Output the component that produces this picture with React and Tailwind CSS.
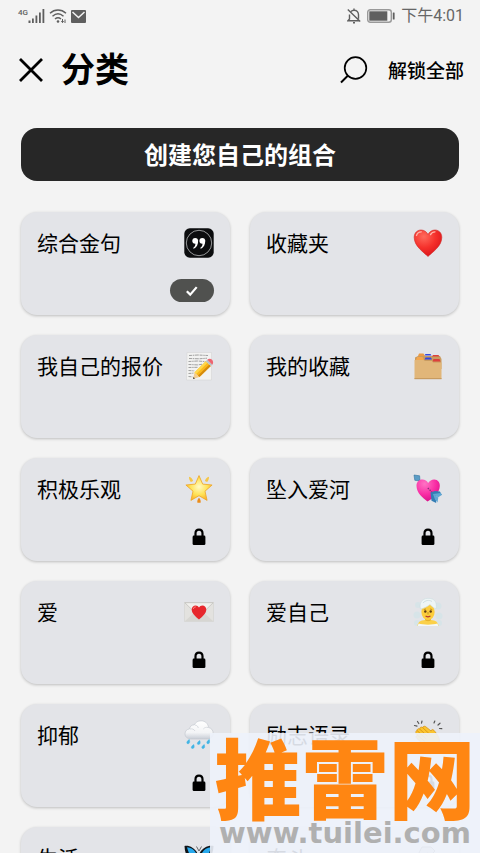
import React from "react";

function QuoteIcon() {
  return (
    <svg viewBox="0 0 30 30" className="h-[30px] w-[30px]">
      <rect x="0.3" y="0.3" width="29.4" height="29.4" rx="5.5" fill="#0c0d0f" />
      <circle cx="15" cy="15" r="12.7" fill="none" stroke="#b9babb" strokeWidth="0.8" />
      <g fill="#fff">
        <circle cx="11.2" cy="12.8" r="2.9" />
        <path d="M14.1 12.6c.2 4-1.500 7-4.300 8.100l-.7-.8c1.700-1.200 2.500-2.800 2.300-5z" />
        <circle cx="18.300" cy="12.800" r="2.900" />
        <path d="M21.200 12.600c.2 4-1.500 7-4.300 8.100l-.7-.8c1.700-1.200 2.500-2.800 2.300-5z" />
      </g>
    </svg>
  );
}

function HeartIcon() {
  return (
    <svg viewBox="0 0 30 30" className="h-[30px] w-[30px]">
      <defs>
        <radialGradient id="heartRed" cx="0.35" cy="0.25" r="0.85">
          <stop offset="0" stopColor="#ff6a5c" />
          <stop offset="0.5" stopColor="#f5302b" />
          <stop offset="1" stopColor="#d50f18" />
        </radialGradient>
      </defs>
      <path d="M15 28.500C10.500 24 1.200 18.300 1.200 9.400 1.200 4.800 4.300 2 8 2c3.200 0 5.500 1.700 7 4.500C16.500 3.700 18.800 2 22 2c3.700 0 6.800 2.800 6.800 7.400C28.800 18.300 19.500 24 15 28.500z" fill="url(#heartRed)" stroke="#cf2a26" strokeWidth="0.6" />
      <path d="M3.500 7.500C4.300 4.900 6 3.800 8.300 3.800M17.500 6.600C18.600 4.700 20 3.800 22 3.800" fill="none" stroke="#ffb5aa" strokeWidth="1.300" strokeLinecap="round" />
    </svg>
  );
}

function MemoIcon() {
  return (
    <svg viewBox="0 0 30 30" className="h-[30px] w-[30px]">
      <path d="M3 1.500h24.500v27.500H2.500z" fill="#f2f2f1" stroke="#d5d5d5" strokeWidth="0.6" />
      <g fill="none" stroke="#8a8a8a" strokeWidth="0.8" strokeDasharray="3 .7 1.500 .6 4 .8">
        <path d="M5 4.500l9-.5 10 .5M5 7.500l10 .3 8-.6M4.500 10.500l9-.5 8 .6M4.500 13.500l9 .4 5-.7M4.500 16.500l9-.2M4.500 19.500l6 .4M4.500 22.500l5-.4M4.500 25.500l4 .4" />
      </g>
      <path d="M10.500 21.500L9 28l6.500-1.900z" fill="#f3cd93" />
      <path d="M9.500 26L9 28l2-.6z" fill="#333" />
      <path d="M10.500 21.500L21.800 10.200l5 4.900-11.300 11z" fill="#fbb81c" />
      <path d="M10.500 21.500L21.800 10.200l1.700 1.600-11.300 11.300z" fill="#ffd84b" />
      <path d="M14 24.600l11.300-11 1.500 1.500-11.300 11z" fill="#d58a0b" />
      <path d="M21.800 10.200l1.500-1.500 5 5-1.500 1.400z" fill="#b9c2c6" />
      <path d="M23.300 8.700c1.500-1.400 3.400-1.300 4.700 0s1.600 3.400.3 5z" fill="#ee6470" />
    </svg>
  );
}

function FolderIcon() {
  return (
    <svg viewBox="0 0 30 30" className="h-[30px] w-[30px]">
      <path d="M2 6.500L5 5h22l1.500 3v10H2z" fill="#c99b5f" />
      <path d="M5 5l1-2.500h4.500L12 5z" fill="#eb9a44" />
      <path d="M11.500 4.500l1-1.500h5l1 1.500z" fill="#3347dd" />
      <path d="M19 5.500L20 4h5.500l1 1.500z" fill="#dd3f3c" />
      <path d="M3 9l1.200-3h5.300l1.500 3z" fill="#f5a54a" />
      <path d="M11.500 8.500l1-2h5.500l1 2z" fill="#3347dd" />
      <path d="M19.500 10.500l1-2.500h6l1 2.500z" fill="#dd3f3c" />
      <path d="M1.500 9h9l1.500 1h7l1 1.500h8.500V28h-27z" fill="#e1b679" />
      <path d="M1.500 27h27v1.200h-27z" fill="#c79b60" />
    </svg>
  );
}

function StarIcon() {
  return (
    <svg viewBox="0 0 30 30" className="h-[30px] w-[30px]">
      <defs>
        <radialGradient id="starGold" cx="0.5" cy="0.45" r="0.6">
          <stop offset="0" stopColor="#fffac5" />
          <stop offset="0.55" stopColor="#ffe255" />
          <stop offset="1" stopColor="#f9a824" />
        </radialGradient>
      </defs>
      <path d="M15 1.600l3.700 8.500 9.400.9-7.100 6.200 2.100 9.200L15 21.700l-8.100 4.700L9 17.200 1.900 11l9.400-.9z" fill="url(#starGold)" stroke="#eea426" strokeWidth="0.8" strokeLinejoin="round" />
      <path d="M5 2.800c2 .5 3.600 2.100 4.100 4.300l-2.200.9C5.700 6.900 4.900 5 5 2.800zM25 2.800c-2 .5-3.600 2.100-4.100 4.300l2.200.9C24.300 6.900 25.100 5 25 2.800z" fill="#f5c647" />
      <path d="M15 23.700c1.300 1.200 2 3 1.600 5.100h-3.200c-.4-2.100.3-3.900 1.600-5.100z" fill="#eb8c19" />
    </svg>
  );
}

function ArrowHeartIcon() {
  return (
    <svg viewBox="0 0 30 30" className="h-[30px] w-[30px]">
      <defs>
        <radialGradient id="heartPink" cx="0.35" cy="0.2" r="0.9">
          <stop offset="0" stopColor="#ff73c4" />
          <stop offset="0.55" stopColor="#f82ba3" />
          <stop offset="1" stopColor="#d00c83" />
        </radialGradient>
      </defs>
      <path d="M4 4l5 5" stroke="#3f7fac" strokeWidth="1.500" />
      <path d="M1 1l5.600.8L7 7 1.800 6.300z" fill="#5b9dc6" stroke="#3274a0" strokeWidth="0.6" />
      <path d="M14.500 27.500C9.700 24 3.500 19 3.500 11.800 3.500 8 5.800 5.400 9.300 5.400c2.700 0 4.700 1.300 5.800 3.700C16.800 6.600 18.800 5.300 21.300 5.400c3.600.2 5.700 3 5.500 6.600-.4 6.500-5.700 12-12.300 15.500z" fill="url(#heartPink)" />
      <path d="M14.800 14l8 8" stroke="#873477" strokeWidth="1.300" strokeDasharray="1.500 1" />
      <path d="M17.500 18.500l2.800 2.700 8.600-.2-2-3.500-5-.5zM17.500 18.500l1 8.200 4.700 2.300-.5-6z" fill="#347db4" />
      <path d="M20 20l5.200 3.200 3.600-2.200-1-2zM20 20l2 5.500 2.500 3 .8-5z" fill="#60a7d4" />
    </svg>
  );
}

function LoveLetterIcon() {
  return (
    <svg viewBox="0 0 30 30" className="h-[30px] w-[30px]">
      <path d="M.5 5.500h29v19H.5z" fill="#e3e2df" stroke="#cfcfcb" strokeWidth="0.5" />
      <path d="M.8 24.300L12 14h6l11.200 10.300z" fill="#d7d6d2" />
      <path d="M.8 5.700L13 17.500c1.200 1 2.800 1 4 0L29.200 5.700z" fill="#f1f0ed" stroke="#bdbcb8" strokeWidth="0.7" />
      <path d="M15 22.500c-3-2.400-7.300-5.800-7.300-9.900 0-2.600 1.700-4.200 3.900-4.200 1.500 0 2.700.8 3.400 2.100.7-1.300 1.900-2.100 3.400-2.100 2.200 0 3.900 1.600 3.900 4.200 0 4.100-4.300 7.500-7.300 9.900z" fill="#e7272c" />
      <path d="M9.500 11.500c.2-1 .9-1.600 1.900-1.600" fill="none" stroke="#ff8c85" strokeWidth="1" strokeLinecap="round" />
    </svg>
  );
}

function SteamIcon() {
  return (
    <svg viewBox="0 0 30 30" className="h-[30px] w-[30px]">
      <g fill="#d4e5e9" opacity="0.75">
        <circle cx="5" cy="8" r="3" />
        <circle cx="4" cy="18" r="3.500" />
        <circle cx="25" cy="9" r="3.500" />
        <circle cx="26" cy="19" r="3.500" />
        <circle cx="4" cy="26" r="3" />
        <circle cx="26" cy="26" r="3" />
      </g>
      <path d="M12 20h6v5h-6z" fill="#e6b12b" />
      <path d="M4.500 29c.3-4 3-5.800 7.500-6 1.500 1.600 4.500 1.600 6 0 4.500.2 7.200 2 7.500 6z" fill="#fbd049" />
      <path d="M5.500 26.500c5 1.500 14 1.500 19 0l.8 2.500H4.700z" fill="#f4f7f7" />
      <ellipse cx="15" cy="15" rx="6.600" ry="8" fill="#fccd3d" />
      <path d="M7.500 12C6 6.500 8.500 1.500 15 1.300c6.500-.2 9.500 4.200 8 10.700-2.300-1-4.500-3-6-4.500C14.500 9.500 11 11.500 7.500 12z" fill="#eef5f6" stroke="#cbdcdf" strokeWidth="0.6" />
      <path d="M10 6c2-2.500 6-3.500 9-1.500" fill="none" stroke="#c6d8dc" strokeWidth="0.8" />
      <circle cx="12.300" cy="14.500" r="1.200" fill="#5c3b13" />
      <circle cx="17.700" cy="14.500" r="1.200" fill="#5c3b13" />
      <path d="M10.800 12.500l2.200-.5M17 12l2.200.5M15 15v2.500" fill="none" stroke="#a97816" strokeWidth="0.7" />
      <path d="M13 19.200c1.200.7 2.800.7 4 0" fill="none" stroke="#b8382e" strokeWidth="1.200" strokeLinecap="round" />
    </svg>
  );
}

function RainIcon() {
  return (
    <svg viewBox="0 0 30 30" className="h-[30px] w-[30px]">
      <defs>
        <linearGradient id="cloudWhite" x1="0" y1="0" x2="0" y2="1">
          <stop offset="0" stopColor="#fff" />
          <stop offset="0.65" stopColor="#f3f4f6" />
          <stop offset="1" stopColor="#c8cdd6" />
        </linearGradient>
      </defs>
      <path d="M7 19c-3.500 0-6-2.100-6-5.200 0-2.700 1.900-4.600 4.500-4.900C6 6 8 4.700 10.300 4.900 11.500 2.200 14 .8 17 .8c4.300 0 7.200 2.800 7.500 6.700 2.800.5 4.700 2.800 4.700 5.700 0 3.500-2.600 5.800-6.200 5.800z" fill="url(#cloudWhite)" stroke="#c4c8d0" strokeWidth="0.7" />
      <path d="M6 9c2-.5 4 .2 5 2M11 5c2 .3 3 1.500 3.300 3M24 7.500c-2-.5-3.500 0-4.700 1.500" fill="none" stroke="#d5d8de" strokeWidth="0.9" />
      <g fill="#42b4e4">
        <path d="M5.300 19.500c.9 2.500.2 4.300-1.300 4.300s-2-2.200 1.300-4.300zM15.800 20.500c.9 2.500.2 4-1.300 4s-2-2 1.300-4zM25.300 19.500c.9 2.500.2 4.300-1.300 4.300s-2-2.200 1.300-4.300zM9.800 24.500c.9 2.500.2 4-1.300 4s-2-2 1.300-4zM20.300 24.500c.9 2.500.2 4-1.300 4s-2-2 1.300-4z" stroke="#42b4e4" strokeWidth="0.5" />
      </g>
    </svg>
  );
}

function ClapIcon() {
  return (
    <svg viewBox="0 0 30 30" className="h-[30px] w-[30px]">
      <path d="M1.500 5.500l2.500.6M4.500 1.500l1.300 2M9 1l-.5 2.200M21 3l.8-2M25 5l2-1.800M26.500 8.500l2.300.2" fill="none" stroke="#555" strokeWidth="1.200" strokeLinecap="round" />
      <path d="M4 10.500c.5-2 1.700-2.300 2.800-1.300-.2-2 1.500-2.800 3-1.500.2-1.800 2-2 3.300-.7l5 4c.2-1.500 1.700-2 2.800-.7 3.500 4 7.300 9 4.600 14.200-3 5-9.500 5.300-14 1.200L4 18.500c-1.600-1.500-1-3 .6-3.200C2.300 13.500 2.400 11 4 10.500z" fill="#fbc52f" stroke="#d68f10" strokeWidth="0.7" />
      <path d="M6.800 9.200l7.400 6.800M9.800 7.700l7 6.600M4.600 15.300l7 6M4 10.500l9 8.300" fill="none" stroke="#d68f10" strokeWidth="0.8" strokeLinecap="round" />
    </svg>
  );
}

function ButterflyIcon() {
  return (
    <svg viewBox="0 0 30 30" className="h-[30px] w-[30px]">
      <path d="M.5 3C6 2 12.500 6 14.500 13 16.500 6 23 2 29.500 3c-.3 7-2.500 12-7 14 1.500 4-1 8.500-4 9-2 0-3-3-3.500-6-.5 3-1.500 6-3.500 6-3-.5-5.500-5-4-9C3 15 .8 10 .5 3z" fill="#101418" />
      <path d="M3 4.300c5 0 9.500 4.200 10.700 10.200C9.500 17 5 13 3 4.300zM27 4.300c-5 0-9.500 4.200-10.700 10.200C20.500 17 25 13 27 4.300z" fill="#28a9ed" />
      <path d="M13.500 17c-3 0-4.500 2-3.500 6 2.500 1 3.500-3 3.500-6zM16.500 17c3 0 4.500 2 3.500 6-2.500 1-3.500-3-3.500-6z" fill="#2289d6" />
      <path d="M12.500 3.500L15 8l2.500-4.500" fill="none" stroke="#333" strokeWidth="0.7" />
    </svg>
  );
}

function MuscleIcon() {
  return (
    <svg viewBox="0 0 30 30" className="h-[30px] w-[30px]">
      <path d="M9 4h9l4 4-4 4-4-2v8c5-4 13-3 15 3l-4 7H5L3 16z" fill="#d8d8d8" stroke="#8a8a8a" strokeWidth="1" />
    </svg>
  );
}

function LockIcon() {
  return (
    <svg viewBox="0 0 14 18" className="h-[18px] w-[14px]" role="img" aria-label="已锁定">
      <path d="M3.500 8.500V5.300C3.500 3 5 1.600 7 1.600s3.500 1.400 3.500 3.700v3.200" fill="none" stroke="#000" strokeWidth="2.200" />
      <rect x="0.6" y="7.600" width="12.800" height="9.400" rx="1.300" fill="#000" />
    </svg>
  );
}

const CATEGORIES = [
  { name: "综合金句", Icon: QuoteIcon, state: "selected" },
  { name: "收藏夹", Icon: HeartIcon, state: "open" },
  { name: "我自己的报价", Icon: MemoIcon, state: "open" },
  { name: "我的收藏", Icon: FolderIcon, state: "open" },
  { name: "积极乐观", Icon: StarIcon, state: "locked" },
  { name: "坠入爱河", Icon: ArrowHeartIcon, state: "locked" },
  { name: "爱", Icon: LoveLetterIcon, state: "locked" },
  { name: "爱自己", Icon: SteamIcon, state: "locked" },
  { name: "抑郁", Icon: RainIcon, state: "locked" },
  { name: "励志语录", Icon: ClapIcon, state: "locked" },
  { name: "生活", Icon: ButterflyIcon, state: "locked" },
  { name: "奋斗", Icon: MuscleIcon, state: "locked" },
];

function CategoryCard({ name, Icon, state }) {
  return (
    <button
      type="button"
      aria-pressed={state === "selected"}
      className="flex min-h-[103px] flex-col justify-between rounded-2xl bg-[#e3e4e8] px-4 pt-4 pb-[13px] text-left shadow-[0_1px_3px_rgba(0,0,0,0.22)]"
    >
      <span className="flex w-full items-start justify-between">
        <span className="text-[21px] leading-7">{name}</span>
        <Icon />
      </span>
      {state === "selected" && (
        <span className="flex h-[23px] w-11 items-center justify-center self-end rounded-full bg-[#50514f]">
          <svg viewBox="0 0 14 12" className="h-3 w-[14px]">
            <path d="M1.800 6.200l3.400 3.400 6.500-7.500" fill="none" stroke="#fff" strokeWidth="2.200" />
          </svg>
        </span>
      )}
      {state === "locked" && (
        <span className="flex w-[30px] justify-center self-end pb-[2px]">
          <LockIcon />
        </span>
      )}
    </button>
  );
}

function StatusBar() {
  return (
    <div className="flex h-8 items-center justify-between pr-4 pl-[18px] text-[#5f5f5f]">
      <div className="flex items-center gap-1">
        <div className="flex">
          <span className="font-['Roboto',sans-serif] text-[8px] leading-[10px] font-medium">4G</span>
          <svg viewBox="0 0 17 16" className="h-4 w-[17px]" fill="currentColor">
            <path d="M.5 12.500h2V15h-2zM4 10.500h1.800V15H4zM7.500 7.500h1.800V15H7.500zM11 4.500h1.800V15H11zM14.500 1h1.800v14h-1.800z" />
          </svg>
        </div>
        <svg viewBox="0 0 18 16" className="h-4 w-[18px]" fill="none" stroke="currentColor" strokeWidth="1.500">
          <path d="M1 5.200c4.800-4.400 11.200-4.400 16 0M3.500 8.200c3.500-3 7.500-3 11 0M6 11c2-1.700 4-1.700 6 0" />
          <circle cx="9" cy="13.500" r="1.300" fill="currentColor" stroke="none" />
          <path d="M13.500 11v3.500M12.300 13.200l1.200 1.400 1.200-1.400M16 15v-3.500" strokeWidth="1" />
        </svg>
        <svg viewBox="0 0 15 13" className="h-[13px] w-[15px]">
          <rect width="15" height="13" rx="1" fill="currentColor" />
          <path d="M1.500 2l6 5.500 6-5.500" fill="none" stroke="#f3f3f3" strokeWidth="1.500" />
        </svg>
      </div>
      <div className="flex items-center gap-[6px]">
        <svg viewBox="0 0 14 16" className="h-4 w-[14px]" fill="none" stroke="currentColor" strokeWidth="1.400">
          <path d="M2.500 6.500V11L1 12.700h11M4 3.500C4.700 2.700 5.600 2.200 7 2.200c2.700 0 4.500 1.900 4.500 4.500v4M6 14.800h2M7 .5v1.700M.8 1.500l12.400 12" />
        </svg>
        <svg viewBox="0 0 28 14" className="h-[14px] w-7">
          <rect x="0.7" y="0.7" width="23.600" height="12.600" rx="2.500" fill="none" stroke="#999" strokeWidth="1.400" />
          <rect x="2.300" y="2.300" width="18" height="9.400" fill="currentColor" />
          <rect x="25.800" y="3.500" width="1.800" height="7" rx="0.500" fill="currentColor" />
        </svg>
        <span className="font-['Roboto','Noto_Sans_CJK_SC',sans-serif] text-[16px] leading-5 text-[#666]">下午4:01</span>
      </div>
    </div>
  );
}

export default function App() {
  return (
    <div className="relative h-screen overflow-hidden bg-[#f3f3f3] font-['Noto_Sans_CJK_SC',sans-serif] text-black">
      <StatusBar />

      <header className="flex h-[76px] items-center justify-between pr-4 pl-[19px]">
        <div className="flex items-center gap-[18px]">
          <button type="button" aria-label="关闭">
            <svg viewBox="0 0 24 24" className="h-6 w-6" fill="none" stroke="#000" strokeWidth="2.800">
              <path d="M1 1l22 22M23 1L1 23" />
            </svg>
          </button>
          <h1 className="pb-1 text-[34px] leading-10 font-bold">分类</h1>
        </div>
        <div className="flex items-center gap-5">
          <button type="button" aria-label="搜索">
            <svg viewBox="0 0 28 28" className="h-7 w-7" fill="none" stroke="#000" strokeWidth="1.700">
              <circle cx="15.500" cy="12" r="10.800" />
              <path d="M8 19.500L1 26.500" strokeWidth="2" />
            </svg>
          </button>
          <button type="button" className="text-[19px] leading-6 font-medium">解锁全部</button>
        </div>
      </header>

      <main className="px-[21px] pt-5">
        <button
          type="button"
          className="block h-[53px] w-full rounded-2xl bg-[#272727] pb-[2px] text-[24px] leading-8 font-bold text-white"
        >
          创建您自己的组合
        </button>

        <div className="mt-[31px] grid grid-cols-2 gap-5">
          {CATEGORIES.map((c) => (
            <CategoryCard key={c.name} {...c} />
          ))}
        </div>
      </main>

      <div className="absolute right-0 bottom-0 flex h-[120px] w-[270px] flex-col items-center bg-[#edf2fb]/90">
        <span className="text-[87px] leading-[84px] font-black whitespace-nowrap text-[#ff8612]">推雷网</span>
        <span className="font-['DejaVu_Sans',sans-serif] text-[29px] leading-8 font-bold text-[#b0b0b0]">www.tuilei.com</span>
      </div>
    </div>
  );
}
